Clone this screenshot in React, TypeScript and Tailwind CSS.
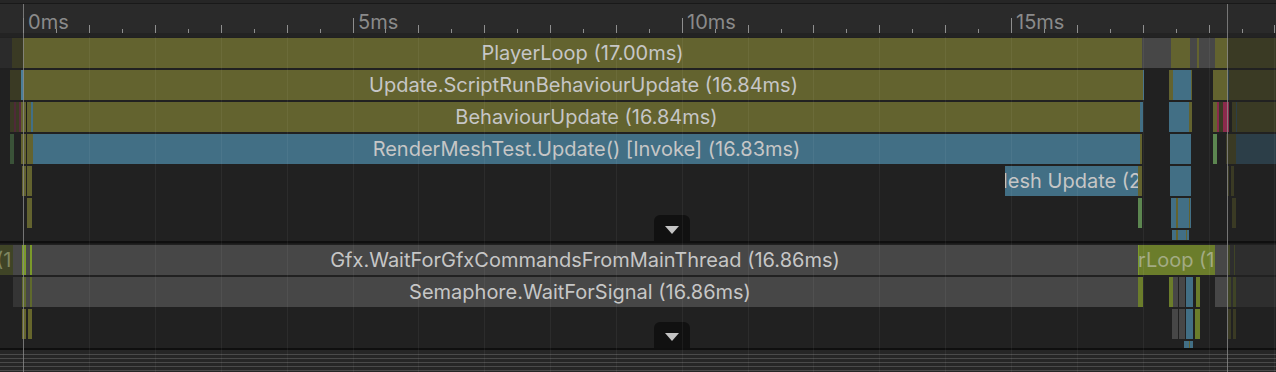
import clsx from "clsx";

type Seg = {
  a: number;
  b: number;
  c: string;
  label?: string;
  shift?: number; // label offset for clipped labels
  tc?: string;
};

const PX_PER_MS = 65.85;
const X0 = 23.3;

const OL = "bg-[#63632f]";
const OL_DIM = "bg-[#3a3a24]";
const BL = "bg-[#426f85]";
const BL_DIM = "bg-[#2c3e48]";
const GR = "bg-[#474747]";
const GR_DIM = "bg-[#2e2e2e]";
const GN = "bg-[#6b7d2b]";
const GN_DIM = "bg-[#3f4426]";
const LG = "bg-[#5c8650]";
const LG_DIM = "bg-[#3a5238]";
const RD = "bg-[#8b2a4c]";
const RD_DIM = "bg-[#4f2a38]";
const DK = "bg-[#1c1c1c]";

// main thread
const mainRows: { h: number; segs: Seg[] }[] = [
  {
    h: 30,
    segs: [
      { a: 0, b: 12, c: "bg-[#2b2b2b]" },
      { a: 12, b: 23, c: OL_DIM },
      { a: 23, b: 1142, c: OL, label: "PlayerLoop (17.00ms)" },
      { a: 1142, b: 1171, c: GR },
      { a: 1171, b: 1190, c: OL },
      { a: 1190, b: 1197, c: GR },
      { a: 1197, b: 1199, c: OL },
      { a: 1199, b: 1215, c: GR },
      { a: 1215, b: 1228, c: OL },
      { a: 1228, b: 1276, c: OL_DIM },
    ],
  },
  {
    h: 30,
    segs: [
      { a: 10, b: 21, c: OL_DIM },
      { a: 21, b: 24, c: "bg-[#4a7e98]" },
      { a: 24, b: 1143, c: OL, label: "Update.ScriptRunBehaviourUpdate (16.84ms)" },
      { a: 1143, b: 1144, c: BL },
      { a: 1169, b: 1173, c: OL },
      { a: 1173, b: 1191, c: BL },
      { a: 1191, b: 1192, c: OL },
      { a: 1213, b: 1228, c: OL },
      { a: 1228, b: 1229, c: BL_DIM },
      { a: 1229, b: 1276, c: OL_DIM },
    ],
  },
  {
    h: 30,
    segs: [
      { a: 10, b: 14, c: OL_DIM },
      { a: 14, b: 16, c: RD_DIM },
      { a: 16, b: 19, c: OL_DIM },
      { a: 19, b: 21, c: "bg-[#5a2a40]" },
      { a: 21, b: 26, c: OL },
      { a: 26, b: 27, c: DK },
      { a: 27, b: 31, c: OL },
      { a: 31, b: 33, c: BL },
      { a: 33, b: 1140, c: OL, label: "BehaviourUpdate (16.84ms)" },
      { a: 1140, b: 1143, c: BL },
      { a: 1169, b: 1189, c: BL },
      { a: 1189, b: 1192, c: OL },
      { a: 1213, b: 1217, c: OL },
      { a: 1217, b: 1219, c: RD },
      { a: 1219, b: 1223, c: OL_DIM },
      { a: 1223, b: 1229, c: RD },
      { a: 1232, b: 1276, c: OL_DIM },
      { a: 1236, b: 1237, c: BL_DIM },
    ],
  },
  {
    h: 30,
    segs: [
      { a: 10, b: 14, c: LG_DIM },
      { a: 21, b: 26, c: OL },
      { a: 27, b: 33, c: OL },
      { a: 33, b: 1140, c: BL, label: "RenderMeshTest.Update() [Invoke] (16.83ms)" },
      { a: 1140, b: 1142, c: OL },
      { a: 1170, b: 1191, c: BL },
      { a: 1213, b: 1217, c: LG },
      { a: 1226, b: 1236, c: OL_DIM },
      { a: 1236, b: 1276, c: BL_DIM },
    ],
  },
  {
    h: 30,
    segs: [
      { a: 22, b: 26, c: OL },
      { a: 27, b: 32, c: OL },
      { a: 1005, b: 1138, c: BL, label: "RenderMesh Update (2.09ms)", shift: -83 },
      { a: 1138, b: 1142, c: OL },
      { a: 1170, b: 1191, c: BL },
      { a: 1227, b: 1229, c: OL_DIM },
      { a: 1231, b: 1234, c: OL_DIM },
    ],
  },
  {
    h: 30,
    segs: [
      { a: 27, b: 32, c: OL },
      { a: 1138, b: 1142, c: LG },
      { a: 1171, b: 1191, c: BL },
      { a: 1176, b: 1178, c: OL },
      { a: 1189, b: 1190, c: OL },
      { a: 1232, b: 1236, c: OL_DIM },
    ],
  },
  {
    h: 10,
    segs: [
      { a: 1172, b: 1189, c: BL },
      { a: 1176, b: 1178, c: OL },
      { a: 1186, b: 1187, c: OL },
    ],
  },
];

// render thread
const renderRows: { h: number; segs: Seg[] }[] = [
  {
    h: 30,
    segs: [
      { a: 0, b: 13, c: GN_DIM, label: "PlayerLoop (1", shift: -116, tc: "text-[#7f8660]" },
      { a: 13, b: 22, c: GR },
      { a: 22, b: 26, c: "bg-[#7b9a2a]" },
      { a: 26, b: 30, c: GR },
      { a: 30, b: 32, c: "bg-[#7b9a2a]" },
      { a: 32, b: 1138, c: GR, label: "Gfx.WaitForGfxCommandsFromMainThread (16.86ms)" },
      { a: 1138, b: 1139, c: "bg-[#7b9a2a]" },
      { a: 1139, b: 1215, c: GN, label: "PlayerLoop (16.86ms)", shift: -52, tc: "text-[#a3ab84]" },
      { a: 1215, b: 1228, c: GR },
      { a: 1228, b: 1230, c: GN_DIM },
      { a: 1230, b: 1276, c: GR_DIM },
      { a: 1234, b: 1235, c: GN_DIM },
    ],
  },
  {
    h: 30,
    segs: [
      { a: 13, b: 22, c: "bg-[#353535]" },
      { a: 22, b: 1138, c: GR, label: "Semaphore.WaitForSignal (16.86ms)" },
      { a: 22, b: 26, c: "bg-[#5f6a2c]" },
      { a: 30, b: 32, c: "bg-[#5f6a2c]" },
      { a: 1138, b: 1143, c: GN },
      { a: 1169, b: 1173, c: GN },
      { a: 1173, b: 1178, c: GR },
      { a: 1179, b: 1185, c: GR },
      { a: 1186, b: 1193, c: BL },
      { a: 1196, b: 1200, c: GN },
      { a: 1215, b: 1228, c: GR },
      { a: 1228, b: 1276, c: GR_DIM },
      { a: 1228, b: 1231, c: GN_DIM },
      { a: 1233, b: 1236, c: GN_DIM },
    ],
  },
  {
    h: 30,
    segs: [
      { a: 22, b: 26, c: "bg-[#66662c]" },
      { a: 28, b: 32, c: "bg-[#66662c]" },
      { a: 1172, b: 1178, c: GR },
      { a: 1179, b: 1185, c: GR },
      { a: 1186, b: 1193, c: BL },
      { a: 1195, b: 1200, c: GN },
      { a: 1228, b: 1231, c: OL_DIM },
      { a: 1233, b: 1236, c: OL_DIM },
    ],
  },
  {
    h: 7,
    segs: [
      { a: 1184, b: 1193, c: BL },
      { a: 1189, b: 1190, c: OL },
    ],
  },
];

function Bar({ s }: { s: Seg }) {
  return (
    <div
      className={clsx("absolute top-0 bottom-0 overflow-hidden", s.c)}
      style={{ left: s.a, width: s.b - s.a }}
    >
      {s.label && s.shift === undefined && (
        <div className="flex h-full items-center justify-center whitespace-nowrap text-[20px] text-[#c6c6c6]">
          {s.label}
        </div>
      )}
      {s.label && s.shift !== undefined && (
        <div
          className={clsx(
            "absolute top-0 bottom-0 flex items-center whitespace-nowrap text-[20px]",
            s.tc ?? "text-[#c6c6c6]"
          )}
          style={{ left: s.shift }}
        >
          {s.label}
        </div>
      )}
    </div>
  );
}

function Lane({ rows, height }: { rows: { h: number; segs: Seg[] }[]; height: number }) {
  return (
    <div className="relative flex flex-col gap-[2px] pt-px" style={{ height }}>
      {rows.map((r, i) => (
        <div key={i} className="relative shrink-0" style={{ height: r.h }}>
          {r.segs.map((s, j) => (
            <Bar key={j} s={s} />
          ))}
        </div>
      ))}
      {/* expand toggle */}
      <div className="absolute bottom-0 left-[654px] flex h-[26px] w-[36px] items-center justify-center rounded-t-[6px] bg-[#111111] pt-[3px]">
        <svg width="14" height="8" viewBox="0 0 14 8">
          <path d="M0 0 H14 L7 8 Z" fill="#c4c4c4" />
        </svg>
      </div>
    </div>
  );
}

const ticks = Array.from({ length: 39 }, (_, k) => k);
const gridMs = Array.from({ length: 19 }, (_, k) => k + 1);

export default function App() {
  return (
    <div className="relative h-[372px] w-[1276px] overflow-hidden bg-[#212121] font-[Inter,'Liberation_Sans',sans-serif]">
      {/* top strip */}
      <div className="h-[3px] bg-[#262626]" />
      <div className="h-px bg-[#191919]" />

      {/* ruler */}
      <div className="relative h-[29px] bg-[#2a2a2a]">
        {ticks.map((k) => {
          const major = k % 10 === 0;
          const mid = k % 2 === 0;
          return (
            <div
              key={k}
              className={clsx(
                "absolute bottom-0 w-px bg-[#8e8e8e]",
                major ? "h-[15px]" : mid ? "h-[8px]" : "h-[4px]"
              )}
              style={{ left: Math.round(X0 + (k * PX_PER_MS) / 2) }}
            />
          );
        })}
        {[0, 5, 10, 15].map((ms) => (
          <div
            key={ms}
            className="absolute top-[6px] text-[20px] leading-[24px] text-[#8a8a8a]"
            style={{ left: Math.round(X0 + ms * PX_PER_MS) + 5 }}
          >
            {ms}ms
          </div>
        ))}
      </div>
      <div className="h-[4px] bg-[#232323]" />

      {/* main thread */}
      <Lane rows={mainRows} height={204} />
      <div className="h-[2px] bg-[#0f0f0f]" />
      <div className="h-px bg-[#1a1a1a]" />

      {/* render thread */}
      <Lane rows={renderRows} height={104} />
      <div className="h-[2px] bg-[#0f0f0f]" />

      {/* collapsed threads */}
      <div className="flex flex-col gap-[3px] bg-[#262626] pt-[4px]">
        <div className="h-px bg-[#4a4a4a]" />
        <div className="h-px bg-[#4a4a4a]" />
        <div className="h-px bg-[#4a4a4a]" />
        <div className="h-px bg-[#4a4a4a]" />
        <div className="h-px bg-[#4a4a4a]" />
        <div className="h-px bg-[#4a4a4a]" />
      </div>

      {/* grid lines */}
      <div className="pointer-events-none absolute top-[37px] right-0 bottom-0 left-0">
        {gridMs.map((ms) => (
          <div
            key={ms}
            className="absolute top-0 bottom-0 w-px bg-white/[0.05]"
            style={{ left: Math.round(X0 + ms * PX_PER_MS) }}
          />
        ))}
      </div>

      {/* frame boundaries */}
      <div className="pointer-events-none absolute top-[4px] bottom-0 left-[23px] w-px bg-[#8a8a8a]/80" />
      <div className="pointer-events-none absolute top-[4px] bottom-0 left-[1227px] w-px bg-[#8a8a8a]/80" />
    </div>
  );
}
